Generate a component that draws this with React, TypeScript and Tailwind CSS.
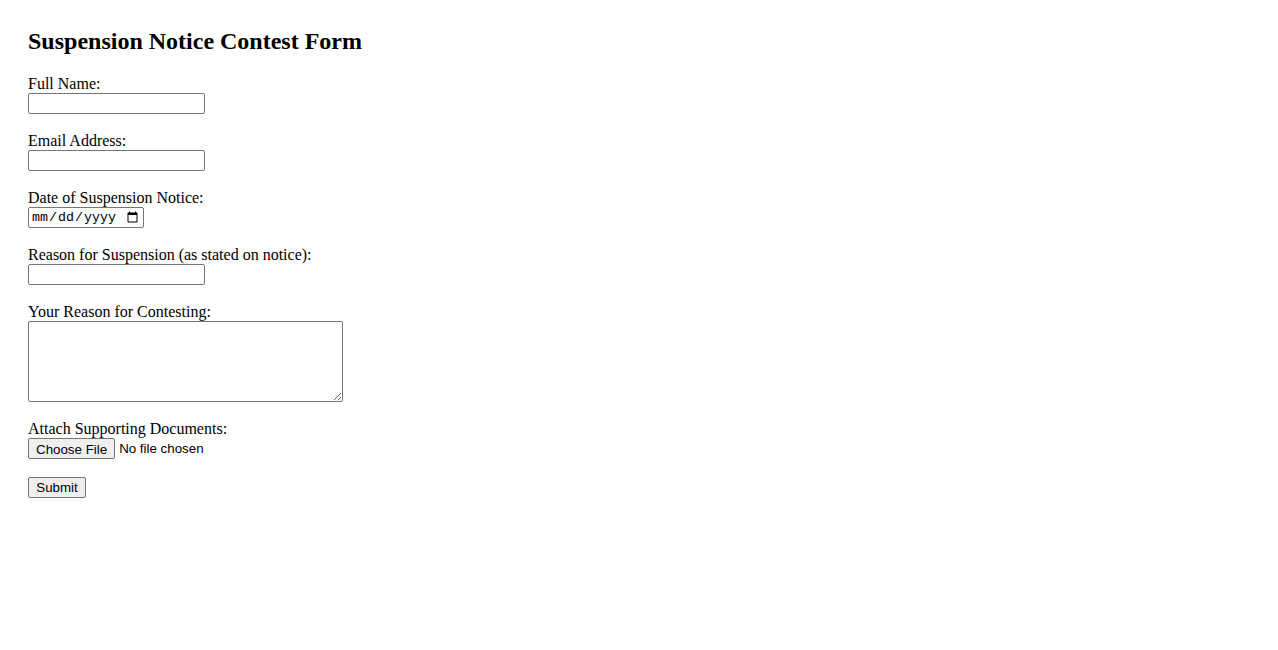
import React from "react";

const inputCls =
  "block w-[177px] h-[21px] border border-[#767676] rounded-[2px] px-[2px] py-[1px] bg-white text-[13.33px] font-['Liberation_Sans',Arial,sans-serif] text-black";

export default function App() {
  return (
    <div className="min-h-[650px] bg-white pt-[28px] pl-[28px] font-['Liberation_Serif','Times_New_Roman',serif] text-[16px] text-black">
      <h2 className="text-[24px] font-bold leading-[27px] mb-[20px]">Suspension Notice Contest Form</h2>
      <form className="flex flex-col" onSubmit={(e) => e.preventDefault()}>
        <div className="flex flex-col mb-[18px]">
          <label htmlFor="name" className="leading-[18px]">Full Name:</label>
          <input id="name" type="text" className={inputCls} />
        </div>
        <div className="flex flex-col mb-[18px]">
          <label htmlFor="email" className="leading-[18px]">Email Address:</label>
          <input id="email" type="email" className={inputCls} />
        </div>
        <div className="flex flex-col mb-[18px]">
          <label htmlFor="date" className="leading-[18px]">Date of Suspension Notice:</label>
          <input
            id="date"
            type="date"
            className="block w-[116px] h-[21px] border border-[#767676] rounded-[2px] px-[2px] py-[1px] bg-white text-[13.33px] font-['Liberation_Mono',monospace] text-black"
          />
        </div>
        <div className="flex flex-col mb-[18px]">
          <label htmlFor="reason" className="leading-[18px]">Reason for Suspension (as stated on notice):</label>
          <input id="reason" type="text" className={inputCls} />
        </div>
        <div className="flex flex-col mb-[18px]">
          <label htmlFor="contest" className="leading-[18px]">Your Reason for Contesting:</label>
          <textarea
            id="contest"
            className="block w-[315px] h-[81px] border border-[#767676] rounded-[2px] p-[2px] bg-white text-[13.33px] font-['Liberation_Mono',monospace] text-black resize"
          />
        </div>
        <div className="flex flex-col mb-[18px]">
          <label htmlFor="docs" className="leading-[18px]">Attach Supporting Documents:</label>
          <input
            id="docs"
            type="file"
            className="block h-[21px] w-[260px] overflow-hidden text-[13.33px] leading-[21px] font-['Liberation_Sans',Arial,sans-serif] text-black file:align-top file:h-[21px] file:bg-[#efefef] file:border file:border-solid file:border-[#767676] file:rounded-[2px] file:px-[7px] file:py-0 file:mr-[4px] file:text-black file:font-['Liberation_Sans',Arial,sans-serif] file:text-[13.33px]"
          />
        </div>
        <div>
          <button
            type="submit"
            className="block h-[21px] w-[58px] bg-[#efefef] border border-[#767676] rounded-[2px] px-[6px] py-[1px] text-[13.33px] leading-none font-['Liberation_Sans',Arial,sans-serif] text-black"
          >
            Submit
          </button>
        </div>
      </form>
    </div>
  );
}
